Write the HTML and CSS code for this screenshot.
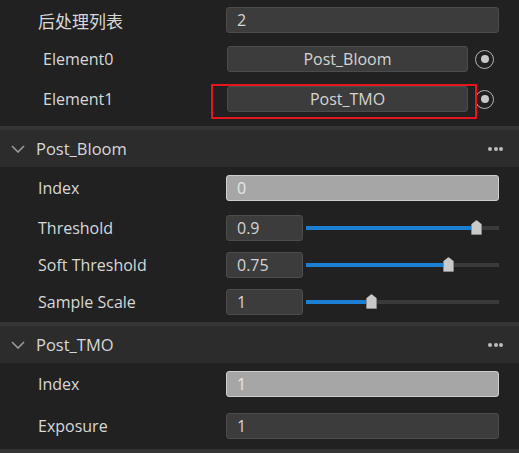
FILE: index.html
```html
<!DOCTYPE html>
<html lang="zh">
<head>
<meta charset="utf-8">
<title>Post Process</title>
<link rel="stylesheet" href="styles.css">
</head>
<body>
<div class="panel">
  <section class="list">
    <div class="row">
      <div class="label cjk">后处理列表</div>
      <div class="field"><div class="input">2</div></div>
    </div>
    <div class="row">
      <div class="label indent">Element0</div>
      <div class="field">
        <div class="btn">Post_Bloom</div>
        <span class="radio"><span class="dot"></span></span>
      </div>
    </div>
    <div class="row mark">
      <div class="label indent">Element1</div>
      <div class="field">
        <div class="btn">Post_TMO</div>
        <span class="radio"><span class="dot"></span></span>
      </div>
      <div class="highlight"></div>
    </div>
  </section>

  <div class="sep"></div>

  <section class="group">
    <header class="head">
      <svg class="chev" width="14" height="8" viewBox="0 0 14 8"><path d="M1 1 L7 7 L13 1" fill="none" stroke="#9a9a9a" stroke-width="1.6"/></svg>
      <span class="title">Post_Bloom</span>
      <span class="more"><i></i><i></i><i></i></span>
    </header>
    <div class="props bloom">
      <div class="row first">
        <div class="label">Index</div>
        <div class="field"><div class="input ro">0</div></div>
      </div>
      <div class="row">
        <div class="label">Threshold</div>
        <div class="field">
          <div class="input num">0.9</div>
          <div class="slider"><div class="fill" style="width:171px"></div><div class="thumb" style="left:165px"></div></div>
        </div>
      </div>
      <div class="row">
        <div class="label">Soft Threshold</div>
        <div class="field">
          <div class="input num">0.75</div>
          <div class="slider"><div class="fill" style="width:143px"></div><div class="thumb" style="left:137px"></div></div>
        </div>
      </div>
      <div class="row">
        <div class="label">Sample Scale</div>
        <div class="field">
          <div class="input num">1</div>
          <div class="slider"><div class="fill" style="width:66px"></div><div class="thumb" style="left:60px"></div></div>
        </div>
      </div>
    </div>
  </section>

  <div class="sep"></div>

  <section class="group">
    <header class="head">
      <svg class="chev" width="14" height="8" viewBox="0 0 14 8"><path d="M1 1 L7 7 L13 1" fill="none" stroke="#9a9a9a" stroke-width="1.6"/></svg>
      <span class="title">Post_TMO</span>
      <span class="more"><i></i><i></i><i></i></span>
    </header>
    <div class="props tmo">
      <div class="row first">
        <div class="label">Index</div>
        <div class="field"><div class="input ro">1</div></div>
      </div>
      <div class="row">
        <div class="label">Exposure</div>
        <div class="field"><div class="input">1</div></div>
      </div>
    </div>
  </section>

  <div class="sep"></div>
</div>
</body>
</html>
```
FILE: styles.css
```css
* { box-sizing: border-box; }
html, body {
  margin: 0;
  padding: 0;
  background: #212121;
}
body {
  width: 519px;
  height: 453px;
  overflow: hidden;
  font-family: "Open Sans", "Noto Sans CJK SC", sans-serif;
  font-size: 16px;
  color: #d8d8d8;
}
.panel {
  display: flex;
  flex-direction: column;
}
.row {
  display: flex;
  align-items: center;
  height: 26px;
  padding-right: 20px;
}
.label {
  width: 226px;
  padding-left: 38px;
  white-space: nowrap;
}
.label.cjk {
  font-family: "Noto Sans CJK SC", sans-serif;
  font-size: 17px;
}
.label.indent { padding-left: 43px; }
.field {
  flex: 1;
  display: flex;
  align-items: center;
  height: 26px;
}
.input {
  flex: 1;
  height: 26px;
  line-height: 24px;
  padding-left: 10px;
  background: #3c3c3c;
  border: 1px solid #4c4c4c;
  border-radius: 3px;
  color: #d4d4d4;
}
.input.ro {
  background: #a6a6a6;
  border-color: #cfcfcf;
  color: #e6e6e6;
}
.input.num {
  flex: 0 0 77px;
}
.btn {
  width: 241px;
  height: 26px;
  line-height: 24px;
  text-align: center;
  background: #3c3c3c;
  border: 1px solid #4c4c4c;
  border-radius: 3px;
  color: #d4d4d4;
  margin-left: 1px;
}
.radio {
  width: 19px;
  height: 19px;
  margin-left: 7px;
  border: 1.5px solid #b4b4b4;
  border-radius: 50%;
  display: flex;
  align-items: center;
  justify-content: center;
}
.dot {
  width: 8px;
  height: 8px;
  border-radius: 50%;
  background: #c8c8c8;
}

/* list section */
.list {
  display: flex;
  flex-direction: column;
  gap: 13px;
  padding: 7px 0 14px;
}
.list .row.mark { margin-top: 1px; position: relative; }
.highlight {
  position: absolute;
  left: 211px;
  top: -2px;
  width: 266px;
  height: 35px;
  border: 2px solid #e8141e;
  pointer-events: none;
}

.sep {
  height: 4px;
  background: #353535;
  flex: none;
}

/* groups */
.head {
  height: 37px;
  background: #2c2c2c;
  display: flex;
  align-items: center;
  padding-left: 11px;
  padding-right: 16px;
}
.chev { flex: none; margin-top: 1px; }
.title {
  margin-left: 11px;
  font-size: 16.5px;
  color: #d8d8d8;
  flex: 1;
}
.more {
  display: flex;
  gap: 1.5px;
}
.more i {
  width: 4px;
  height: 4px;
  border-radius: 50%;
  background: #bdbdbd;
}

.props {
  display: flex;
  flex-direction: column;
  gap: 11px;
  padding-top: 8px;
}
.bloom { padding-bottom: 7px; }
.bloom .row.first { margin-bottom: 3px; }
.tmo { padding-bottom: 10px; gap: 16px; }

.slider {
  position: relative;
  flex: 1;
  height: 4px;
  margin-left: 3px;
  background: #3a3a3a;
}
.fill {
  height: 4px;
  background: #1b7fd3;
}
.thumb {
  position: absolute;
  top: -6px;
  width: 11px;
  height: 15px;
  background: #c9c9c9;
  border: 1px solid #8a8a8a;
  border-radius: 1px;
  clip-path: polygon(50% 0, 100% 30%, 100% 100%, 0 100%, 0 30%);
}
```
